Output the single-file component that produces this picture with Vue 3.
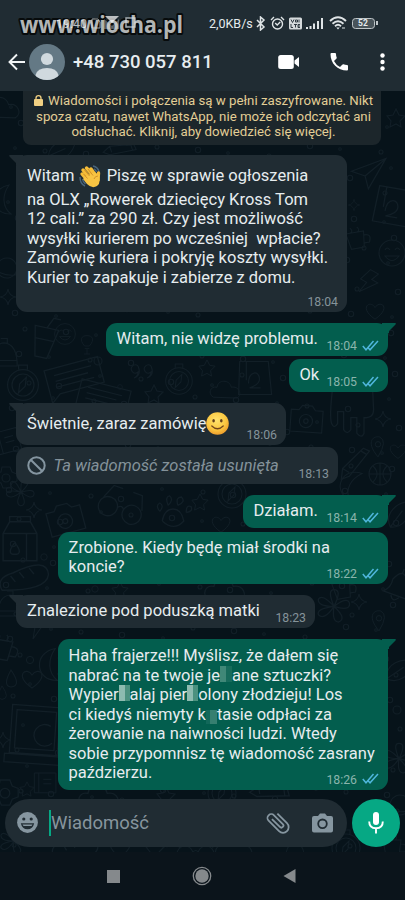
<script setup>
const messages = [
  {
    side: 'in', tail: true, top: 10, width: 331, height: 157, pad: 7.5, time: '18:04',
    lines: [
      [{ t: 'Witam ' }, { icon: 'wave' }, { t: ' Piszę w sprawie ogłoszenia' }],
      [{ t: 'na OLX „Rowerek dziecięcy Kross Tom' }],
      [{ t: '12 cali.” za 290 zł. Czy jest możliwość' }],
      [{ t: 'wysyłki kurierem po wcześniej  wpłacie?' }],
      [{ t: 'Zamówię kuriera i pokryję koszty wysyłki.' }],
      [{ t: 'Kurier to zapakuje i zabierze z domu.' }]
    ]
  },
  { side: 'out', tail: true, top: 11, width: 282, height: 33, pad: 6, time: '18:04', lines: [[{ t: 'Witam, nie widzę problemu.' }]] },
  { side: 'out', top: 3, width: 99, height: 33, pad: 6, time: '18:05', lines: [[{ t: 'Ok' }]] },
  { side: 'in', tail: true, top: 11, width: 270, height: 42, pad: 7, time: '18:06', lines: [[{ t: 'Świetnie, zaraz zamówię' }, { icon: 'smile' }]] },
  { side: 'in', deleted: true, top: 2, width: 322, height: 37, pad: 9, time: '18:13', lines: [[{ icon: 'ban' }, { t: 'Ta wiadomość została usunięta' }]] },
  { side: 'out', tail: true, top: 11, width: 145, height: 33, pad: 6, time: '18:14', lines: [[{ t: 'Działam.' }]] },
  { side: 'out', top: 3.5, width: 330, height: 52.5, pad: 6, time: '18:22', lines: [[{ t: 'Zrobione. Kiedy będę miał środki na' }], [{ t: 'koncie?' }]] },
  { side: 'in', tail: true, top: 11, width: 299, height: 33, pad: 6, time: '18:23', lines: [[{ t: 'Znalezione pod poduszką matki' }]] },
  {
    side: 'out', tail: true, top: 11, width: 330, height: 150.5, pad: 7, time: '18:26',
    lines: [
      [{ t: 'Haha frajerze!!! Myślisz, że dałem się' }],
      [{ t: 'nabrać na te twoje je' }, { icon: 'pixA' }, { t: 'ane sztuczki?' }],
      [{ t: 'Wypier' }, { icon: 'pixB' }, { t: 'alaj pier' }, { icon: 'pixB' }, { t: 'olony złodzieju! Los' }],
      [{ t: 'ci kiedyś niemyty k' }, { icon: 'pixC' }, { t: 'tasie odpłaci za' }],
      [{ t: 'żerowanie na naiwności ludzi. Wtedy' }],
      [{ t: 'sobie przypomnisz tę wiadomość zasrany' }],
      [{ t: 'paździerzu.' }]
    ]
  }
]

// Faint wallpaper ornaments: [shape, x, y, scale, rotation]
const doodles = [
  ['cloud', 2, 108, 1.1, 0], ['star', 396, 118, 1, 0], ['ring', 372, 112, 1, 0], ['pen', 120, 150, 1, 20], ['leaf', 60, 150, 1, 30],
  ['plane', 368, 172, 1.1, 10], ['shirt', 392, 206, 1.2, 10], ['cup', 358, 240, 1, -10], ['face', 392, 253, 1, 0], ['bolt', 368, 282, 1, 30],
  ['moon', 6, 200, 1, 0], ['planet', 7, 268, 1, 30], ['spark', 8, 297, 1, 0], ['heart', 375, 312, 0.9, 0], ['spark', 354, 205, 0.7, 0],
  ['glass', 44, 342, 1.2, 12], ['face', 65, 334, 0.8, 0], ['bulb', 87, 342, 0.8, 0], ['compass', 23, 385, 1.1, 0], ['note', 75, 375, 1.2, -15],
  ['note', 105, 396, 1.1, 14], ['star', 154, 394, 1, 0], ['quote', 145, 370, 1, 0], ['compass', 179, 381, 0.95, 0], ['star', 207, 368, 0.9, 0],
  ['cloud', 226, 390, 0.9, 0], ['shirt', 254, 378, 1.1, 0], ['ring', 98, 361, 1, 0], ['ring', 120, 387, 0.6, 0], ['pot', 4, 355, 1.1, 0],
  ['camera', 306, 420, 1.1, 4], ['octo', 352, 408, 1.2, 0], ['spark', 383, 419, 1, 0], ['pin', 378, 447, 0.9, 0], ['ball', 380, 474, 1, 0],
  ['pen', 355, 464, 1.2, -20], ['gear', 6, 477, 1, 0], ['book', 8, 440, 1, -15], ['moon', 352, 485, 1, 30], ['heart', 398, 452, 0.8, 0],
  ['flower', 20, 495, 1, 20], ['spark', 34, 510, 1, 0], ['camera', 65, 520, 1.2, -15], ['glasses', 120, 508, 1.2, 20], ['paw', 173, 515, 1.2, 0],
  ['star', 200, 502, 0.9, 0], ['compass', 232, 494, 1, 0], ['heart', 221, 525, 0.9, 0], ['carton', 20, 540, 1.3, 0], ['bread', 24, 578, 1.3, -8],
  ['ring', 44, 557, 0.8, 0], ['leaf', 398, 515, 1.1, 0], ['bell', 398, 586, 1.2, 20], ['cup', 344, 590, 1, -10], ['spark', 359, 602, 1, 0],
  ['flower', 334, 610, 1.2, 0], ['cloud', 226, 590, 1.2, 0], ['pin', 379, 621, 0.9, 0], ['star', 120, 590, 0.9, 0], ['ring', 95, 589, 0.8, 0],
  ['pot', 10, 606, 1, 0], ['bolt', 36, 626, 1, 0], ['cup', 3, 650, 1.2, 10], ['heart', 32, 680, 1, 0], ['drop', 11, 679, 1, 0],
  ['drop', 2, 693, 0.8, 0], ['moon', 52, 665, 1.1, 0], ['ring', 30, 660, 0.9, 0], ['laptop', 37, 735, 1.2, 4], ['star', 27, 789, 0.8, 0],
  ['gear', 5, 792, 1.2, 0], ['book', 46, 782, 0.9, 0], ['spark', 3, 740, 1, 0], ['leaf', 398, 670, 1.1, 20], ['ring', 397, 710, 1, 0],
  ['flower', 399, 762, 1.1, 0], ['planet', 400, 805, 1, 20], ['cloud', 100, 797, 1.2, 0], ['compass', 222, 793, 1, 0], ['star', 166, 796, 1, 0],
  ['pen', 270, 793, 1.2, 30], ['bread', 75, 848, 1.2, 0], ['compass', 346, 848, 1, 0], ['flower', 14, 844, 1, 0], ['star', 155, 849, 1, 0],
  ['cloud', 235, 849, 1.1, 0], ['paw', 295, 848, 1, 0], ['cup', 394, 848, 1, 0], ['heart', 120, 849, 1, 0], ['glasses', 195, 852, 1, 0]
]
const dots = []
for (let y = 98; y < 850; y += 23) {
  for (let x = 5 + (y * 7) % 19; x < 405; x += 37) {
    dots.push([x + (y * 3 + x) % 11, y + (x * 5) % 13, 1.3 + (x + y) % 3 * 0.7])
  }
}
const shapes = {
  cloud: 'M-14 8c-7-4-3-13 4-11c1-9 14-9 16 0c8-2 13 8 6 12z',
  star: 'M0-9l3 6l6 1l-5 5l1 6l-5-3l-6 3l1-6l-4-5l6-1z',
  ring: 'M-4 0a4 4 0 1 0 8 0a4 4 0 1 0-8 0',
  pen: 'M-15 8l4-8L11-10l4 4L-8 8zM-11 0l4 5M8-9l4 5',
  leaf: 'M-7 11C-13-2 0-12 10-12C13 2 4 12-7 11zM-7 11L4-4',
  plane: 'M-15 2L14-15L3 15L-2 4zM-2 4L14-15',
  shirt: 'M-13-15h26l3 30h-30zM-7-15v17M-5 5c0-12 10-12 10-4q0 5-9 8h10',
  cup: 'M-11-8h18l-2 16h-13zM7-4q8 0 4 8h-5M-6-13q3 3 0 5M1-13q3 3 0 5',
  face: 'M-13 0a13 13 0 1 0 26 0a13 13 0 1 0-26 0M-7-3q2-4 5 0M3-3q2-4 5 0M-7 3q7 9 14 0z',
  bolt: 'M-4-12h9l-3 8h7l-12 17l2-12h-7z',
  moon: 'M3-15C-18-11-15 15 5 14C-4 7-4-5 3-15z',
  planet: 'M-10 0a10 10 0 1 0 20 0a10 10 0 1 0-20 0M-9 3q-12 7-8 0M9-4q12-7 8 0Q5 10-12 7',
  spark: 'M0-8q1 7 8 8q-7 1-8 8q-1-7-8-8q7-1 8-8z',
  heart: 'M0 8C-19-5-5-14 0-5C6-14 19-5 0 8z',
  glass: 'M-10-12h20l-5 25h-10zM-8-2h16M0-12l4-9h6',
  bulb: 'M-3 5c-7-8-4-13 3-13s10 5 3 13zM-3 8h6M0 8v7M-4 15h8',
  compass: 'M-14 0a14 14 0 1 0 28 0a14 14 0 1 0-28 0M-10 0a10 10 0 1 0 20 0a10 10 0 1 0-20 0M-3-1l6-6l-1 8l-6 6zM-4-14v-4h8v4',
  note: 'M-24-10h46v22h-38l-8 6zM-17-4h32M-17 1h28M-17 6h32',
  quote: 'M-7-4a4 4 0 1 0 0 6q0 4-4 6q8-3 4-12M6-4a4 4 0 1 0 0 6q0 4-4 6q8-3 4-12',
  pot: 'M-12 10Q-12-10 0-11Q12-10 12 10zM-3-15h6v4M-12 5h24',
  camera: 'M-14-9h7l3-4h9l3 4h7v20h-29zM-6 1a6 6 0 1 0 12 0a6 6 0 1 0-12 0M-2 1a2 2 0 1 0 4 0a2 2 0 1 0-4 0',
  octo: 'M-16-18q-3 25-1 31q2 5 5 0v-10h5v15q3 5 6 0v-10h5v13q4 5 6 0v-13q8 1 8-7l-1-20',
  pin: 'M0 11C-15-7-4-13 2-11Q11-7 0 11zM-3-3a3 3 0 1 0 6 0a3 3 0 1 0-6 0',
  ball: 'M-11 0a11 11 0 1 0 22 0a11 11 0 1 0-22 0M-11 0h22M0-11v22M-7-8q8 8 0 16M7-8q-8 8 0 16',
  gear: 'M-10-4l5-1l1-5h8l2 5l5 2v7l-5 2l-2 5h-7l-2-5l-5-2zM-4 1a4 4 0 1 0 8 0a4 4 0 1 0-8 0',
  book: 'M-13-10h24v22h-24zM-8-10v22M-3-3h9M-3 2h9',
  flower: 'M0-3q-6-14 0-14q7 0 0 14q12-9 13-2q0 6-13 2q11 10 4 13q-6 0-4-13q-8 12-13 7q-2-5 13-7q-14 0-13-6q3-5 13 6',
  glasses: 'M-18 2a8 8 0 1 0 16 0a8 8 0 1 0-16 0M3 2a8 8 0 1 0 16 0a8 8 0 1 0-16 0M-2 0q3-3 5 0M-16-4l5-12h8M18-4l-4-12h-8',
  paw: 'M-9 5q2-10 9-10t9 10q-8 9-18 0M-11-3q-4-5 0-7q4 2 0 7M-4-8q-3-7 1-8q4 3-1 8M4-8q-2-7 3-7q4 4-3 7M11-2q0-7 4-5q2 4-4 5',
  carton: 'M-13-5l5-9h16l5 9v21h-26zM-13-5h26M-8-14v-4h16v4M5-5v21M-4 2q-7 9 0 9t0-9',
  bread: 'M-18 7Q-22-3-8-5Q20-14 19 0Q16 12-18 7zM-10-3l3 5M-3-5l3 5M5-7l3 5',
  bell: 'M-10 8q5-5 4-12q6-14 13 0q0 8 5 12zM-3 9q3 6 7 0M0-11v-4',
  drop: 'M0-9Q11 7 0 8Q-9 7 0-9z',
  laptop: 'M-22-24h40v40h-40zM-18-20h33v32h-33zM-26 17h46v7h-46zM11-8a9 9 0 1 0 2 14'
}
</script>

<template>
  <div class="phone">
    <svg class="wallpaper" width="405" height="900" viewBox="0 0 405 900" aria-hidden="true">
      <path v-for="(d, i) in doodles" :key="i" :d="shapes[d[0]]" :transform="`translate(${d[1]} ${d[2]}) rotate(${d[4]}) scale(${d[3]})`" />
      <circle v-for="(c, i) in dots" :key="'c' + i" :cx="c[0]" :cy="c[1]" :r="c[2]" />
    </svg>

    <header class="top">
      <div class="status">
        <div class="status-left">
          <span>19:40</span>
          <svg width="50" height="14" viewBox="0 0 50 14"><path d="M2 3h6l2 3v6H2z" fill="none" stroke="#dce3e6" /><path d="M15 0h14l-7 7z" fill="#fff" /><path d="M14 3v10h15V3l-7 7z" fill="#e5eaec" opacity=".5" /><path d="M36 2h9v9h-9z" fill="none" stroke="#dce3e6" stroke-width="1.500" /></svg>
        </div>
        <div class="status-right">
          <span class="speed">2,0KB/s</span>
          <svg class="bt" width="10" height="15" viewBox="0 0 10 15"><path d="M1 4l7 7-3.500 3V1L8 4l-7 7" fill="none" stroke="#dfe4e6" stroke-width="1.500" /></svg>
          <svg class="alarm" width="15" height="15" viewBox="0 0 15 15" fill="none" stroke="#dfe4e6" stroke-width="1.400"><circle cx="7.500" cy="8" r="5" /><path d="M1 4l3-3M14 4l-3-3M5.200 7l2 2 3-3" /></svg>
          <svg class="volte" width="13" height="13" viewBox="0 0 13 13"><rect width="13" height="12" y=".5" rx="1.500" fill="#d5dadc" /><path d="M2 2.500l1.500 3 1.500-3M6.500 3h2v2h-2zM10 2.500v3M2 7v3.500h2M5 7.500h3M6.500 7.500v3M11 7.500H9v3h2M9 9h2" fill="none" stroke="#202c33" stroke-width=".9" /></svg>
          <svg class="signal" width="19" height="13" viewBox="0 0 19 13" fill="#dfe4e6"><path d="M1 10h2v2H1zM4.500 9h2v3h-2zM8 6.500h2V12H8zM12 4h2v8h-2zM16 1h2v11h-2z" /></svg>
          <svg class="wifi" width="18" height="14" viewBox="0 0 18 14"><path d="M1 5q8-7.500 16 0M3.500 7.700q5.500-5 11 0M6 10.200q3-2.700 6 0" fill="none" stroke="#dfe4e6" stroke-width="1.900" /><path d="M7.300 11.500h3.400L9 13.500z" fill="#dfe4e6" /><path d="M13 11h3v2h-3z" fill="#7d878c" /></svg>
          <span class="battery"><i></i><b>52</b></span>
        </div>
      </div>
      <div class="bar">
        <svg class="back" width="18" height="18" viewBox="0 0 18 18"><path d="M17 9H2M9 1.500L1.500 9 9 16.500" fill="none" stroke="#f1f4f5" stroke-width="1.900" /></svg>
        <svg class="avatar" width="36" height="36" viewBox="0 0 36 36"><clipPath id="round"><circle cx="18" cy="18" r="18" /></clipPath><g clip-path="url(#round)"><rect width="36" height="36" fill="#647985" /><circle cx="18" cy="15" r="6.100" fill="#d0d9de" /><path d="M6.500 36v-5q2-7 11.500-7t11.500 7v5z" fill="#d0d9de" /></g></svg>
        <span class="phone-no">+48 730 057 811</span>
        <svg class="video" width="22" height="14" viewBox="0 0 22 14" fill="#fff"><rect x=".2" width="15.600" height="14" rx="2.500" /><path d="M16.500 5.500L21 2v10l-4.500-3.500z" /></svg>
        <svg class="call" width="18" height="18" viewBox="0 0 18 18"><path d="M1.500 0H5q1 0 1 1 0 2 .7 3.500.2.700-.4 1.300L4 8q2 4 6 6l2.200-2.300q.6-.6 1.300-.4 1.500.7 3.500.7 1 0 1 1v3.500q0 1-1 1C7.500 17.500.5 10.500.5 1q0-1 1-1z" fill="#fff" /></svg>
        <svg class="more" width="5" height="18" viewBox="0 0 5 18" fill="#fff"><circle cx="2.500" cy="2.500" r="2.200" /><circle cx="2.500" cy="9" r="2.200" /><circle cx="2.500" cy="15.500" r="2.200" /></svg>
      </div>
      <svg class="watermark" width="190" height="40" viewBox="0 0 190 40"><text x="8" y="27" textLength="163" lengthAdjust="spacingAndGlyphs">www.wiocha.pl</text></svg>
    </header>

    <main class="chat">
      <div class="notice">
        <div class="n1"><svg width="9" height="11" viewBox="0 0 9 11"><rect y="4" width="9" height="7" rx="1" fill="#f0cf82" /><path d="M2 5V3q0-2.300 2.500-2.300T7 3v2" fill="none" stroke="#f0cf82" stroke-width="1.300" /></svg>Wiadomości i połączenia są w pełni zaszyfrowane. Nikt</div>
        <div class="n2">spoza czatu, nawet WhatsApp, nie może ich odczytać ani</div>
        <div class="n3">odsłuchać. Kliknij, aby dowiedzieć się więcej.</div>
      </div>

      <div
        v-for="(m, i) in messages" :key="i" class="bubble" :class="[m.side, { tail: m.tail, deleted: m.deleted }]"
        :style="{ marginTop: m.top + 'px', width: m.width + 'px', height: m.height + 'px', paddingTop: m.pad + 'px' }"
      >
        <div class="text">
          <div v-for="(line, j) in m.lines" :key="j" class="line" :class="{ tall: line.some(s => s.icon === 'wave' || s.icon === 'smile') }">
            <template v-for="(s, k) in line" :key="k">
              <span v-if="s.t">{{ s.t }}</span>
              <svg v-else-if="s.icon === 'wave'" class="wave" width="22" height="23" viewBox="0 0 22 23">
                <path d="M14 1q5 1 6 6M15 4q2 1 2.500 3M1 12q0 7 5 9M3.500 14q.5 3 3 5" fill="none" stroke="#48637b" stroke-width="1.500" />
                <g fill="none" stroke="#f6bd38" stroke-width="3.400" stroke-linecap="round"><path d="M3 9l7 8M4 5l9 10M7.500 3l8 9M12 4l5 7M19 15l.5-7" /></g>
                <path d="M7 11l9-4 4 4q2 7-2 10-5 3-10-2l-4-5z" fill="#f8c443" />
                <path d="M5.500 5l5 6M9 4l5 6.500M4.500 9l4 4.500M15 14q1-3 4-3" fill="none" stroke="#c98525" stroke-width=".8" />
              </svg>
              <svg v-else-if="s.icon === 'smile'" class="smile" width="23" height="23" viewBox="0 0 23 23">
                <defs><radialGradient id="sun" cx="45%" cy="35%" r="65%"><stop offset="0" stop-color="#ffe36d" /><stop offset=".65" stop-color="#fbc740" /><stop offset="1" stop-color="#ee9e2d" /></radialGradient></defs>
                <circle cx="11.500" cy="11.500" r="11.300" fill="url(#sun)" /><ellipse cx="7.600" cy="8.800" rx="1.300" ry="1.800" fill="#65401b" /><ellipse cx="15.300" cy="8.800" rx="1.300" ry="1.800" fill="#65401b" /><path d="M5.800 14q5.700 5.500 11.400 0" fill="none" stroke="#72451b" stroke-width="1.300" stroke-linecap="round" />
              </svg>
              <svg v-else-if="s.icon === 'ban'" class="ban" width="19" height="19" viewBox="0 0 19 19" fill="none" stroke="#8495a0" stroke-width="2"><circle cx="9.500" cy="9.500" r="8.200" /><path d="M3.700 3.700l11.600 11.600" /></svg>
              <i v-else class="pix" :class="s.icon"></i>
            </template>
          </div>
        </div>
        <div class="meta">
          <span>{{ m.time }}</span>
          <svg v-if="m.side === 'out'" class="ticks" width="17" height="11" viewBox="0 0 17 11"><path d="M.8 6l3.200 3.800L11.500 1M6.300 8l1.700 1.800L16 1" fill="none" stroke="#4fb6dc" stroke-width="1.500" /></svg>
        </div>
        <svg v-if="m.tail" class="nib" width="14" height="10" viewBox="0 0 14 10"><path d="M14 0H1q-1.500 0-.5 1.500L7 8v2h7z" /></svg>
      </div>
    </main>

    <footer class="composer">
      <div class="field">
        <svg class="emoji" width="21" height="21" viewBox="0 0 21 21"><circle cx="10.500" cy="10.500" r="10.400" fill="#8696a0" /><g fill="#202c33"><circle cx="6.800" cy="7" r="1.600" /><circle cx="14.200" cy="7" r="1.600" /><path d="M3.800 11.200h13.400q-1.400 6-6.700 6t-6.700-6z" /></g><path d="M5.500 12.500h10l-1 1.500h-8z" fill="#8696a0" /></svg>
        <i class="caret"></i>
        <span class="hint">Wiadomość</span>
        <svg class="clip" width="26" height="26" viewBox="1 1 22 22"><path d="M16.500 6v11.500a4 4 0 0 1-8 0V5a2.500 2.500 0 0 1 5 0v10.500a1 1 0 0 1-2 0V6H10v9.500a2.500 2.500 0 0 0 5 0V5a4 4 0 0 0-8 0v12.500a5.500 5.500 0 0 0 11 0V6z" transform="rotate(-45 12 12)" fill="#8696a0" /></svg>
        <svg class="cam" width="21" height="20" viewBox="0 0 21 20"><path d="M2 3h4l2-2.500h5L15 3h4q2 0 2 2v12.500q0 2-2 2H2q-2 0-2-2V5q0-2 2-2z" fill="#8696a0" /><circle cx="10.500" cy="10.800" r="4.300" fill="#8696a0" stroke="#202c33" stroke-width="1.800" /></svg>
      </div>
      <div class="mic">
        <svg width="16" height="22" viewBox="0 0 16 22"><rect x="5" width="6" height="13" rx="3" fill="#fff" /><path d="M1.200 9.500q0 6.700 6.800 6.700t6.800-6.700M8 16v5.500" fill="none" stroke="#fff" stroke-width="1.900" /></svg>
      </div>
    </footer>

    <nav class="nav">
      <i class="square"></i>
      <svg class="home" width="20" height="20" viewBox="0 0 20 20"><circle cx="10" cy="10" r="8.700" fill="none" stroke="#85898c" stroke-width="1.300" /><circle cx="10" cy="10" r="6.700" fill="#85898c" /></svg>
      <svg class="prev" width="13" height="14" viewBox="0 0 13 14"><path d="M12.500 0v14L.5 7z" fill="#85898c" /></svg>
    </nav>
  </div>
</template>

<style>
body { margin: 0; background: #07131a; }
</style>

<style scoped>
.phone { position: relative; isolation: isolate; width: 405px; height: 900px; display: flex; flex-direction: column; overflow: hidden; background: #07131a; font-family: Roboto, "Noto Sans", sans-serif; color: #e6ecef; }
.wallpaper { position: absolute; left: 0; top: 0; z-index: -1; fill: none; stroke: #121f27; stroke-width: 1.1; }
svg { display: block; flex: none; }
.top { position: relative; height: 91px; flex: none; background: #202c33; }
.status { height: 44px; display: flex; justify-content: space-between; font-size: 12.5px; }
.status-left { position: relative; z-index: 1; opacity: .7; display: flex; align-items: center; gap: 1px; padding-left: 56px; height: 46px; color: #fff; }
.status-left svg { margin-left: 2px; }
.status-right { display: flex; align-items: center; height: 46px; padding-right: 30.5px; }
.speed { width: 44px; font-size: 12.5px; white-space: nowrap; }
.bt { margin-left: 2.5px; }
.alarm { margin-left: 4.5px; }
.volte { margin-left: 4px; }
.signal { margin-left: 3px; }
.wifi { margin-left: 4.5px; }
.battery { position: relative; box-sizing: border-box; width: 23px; height: 11px; margin-left: 5px; border: 1.5px solid #bfc6c9; border-radius: 3.5px; background: #49545a; display: flex; align-items: center; justify-content: center; }
.battery b { font-size: 8.5px; line-height: 8px; font-weight: 700; }
.battery i { position: absolute; right: -4px; top: 2px; width: 2px; height: 4px; background: #bfc6c9; }
.watermark { position: absolute; left: 12px; top: 6px; opacity: .9; overflow: visible; }
.watermark text { font: 700 23.5px "Open Sans", sans-serif; fill: #c2c4c4; stroke: #050808; stroke-width: 4px; paint-order: stroke; stroke-linejoin: round; }
.bar { height: 36px; display: flex; align-items: center; padding: 0 20px 0 8px; }
.avatar { margin-left: 3px; }
.phone-no { margin-left: 8px; font-size: 18.5px; font-weight: 500; flex: 1; white-space: nowrap; color: #e7edf0; }
.call { margin-left: 30px; }
.more { margin-left: 32px; }
.chat { height: 699px; flex: none; display: flex; flex-direction: column; align-items: flex-start; padding: 0 17px 0 16px; }
.notice { box-sizing: border-box; width: 358px; height: 54px; margin-left: 7px; border-radius: 0 0 8px 8px; background: #1c262b; color: #e3ce96; font-size: 13.25px; line-height: 15.6px; padding: 2px 0 0 3px; white-space: nowrap; display: flex; flex-direction: column; align-items: center; }
.n1 { display: flex; align-items: center; }
.n1 svg { margin-right: 5px; }
.bubble { position: relative; box-sizing: border-box; display: grid; flex: none; padding: 0 9px 3px 11px; border-radius: 11px; background: #202c33; }
.bubble.out { align-self: flex-end; padding-left: 10.5px; background: #035e4e; }
.text, .meta { grid-area: 1 / 1; }
.line { display: flex; align-items: center; height: 19.5px; font-size: 16.5px; line-height: 19.5px; white-space: pre; }
.line.tall { height: 27px; }
.wave { margin: 0 1.5px 0 .5px; }
.meta { align-self: end; justify-self: end; display: flex; align-items: center; gap: 5px; font-size: 12.3px; line-height: 14px; color: #85939a; }
.out .meta { color: #8ab5ac; }
.ticks { margin-bottom: 2px; }
.nib { position: absolute; top: 0; left: -7px; fill: #202c33; }
.out .nib { left: auto; right: -8px; transform: scaleX(-1); fill: #035e4e; }
.deleted .text { color: #84929a; font-style: italic; }
.ban { margin-right: 7.5px; }
.pix { align-self: stretch; width: 11px; }
.pixA { background: linear-gradient(90deg, #408878 50%, #176b5b 50%); height: 16px; width: 12px; }
.pixB { background: linear-gradient(90deg, #8dbbb0 55%, #4b917f 55%); height: 16px; }
.pixC { background: linear-gradient(90deg, #12685a 40%, #367f70 40%); height: 14px; margin-top: 5px; }
.composer { display: flex; flex: none; height: 62px; box-sizing: border-box; padding: 8.5px 5px 0; }
.field { box-sizing: border-box; width: 342px; height: 48px; border-radius: 24px; background: #202c33; display: flex; align-items: center; padding: 0 14px 0 12px; }
.caret { width: 2px; height: 26px; margin-left: 11px; background: #06a884; }
.hint { flex: 1; font-size: 18.5px; color: #87959e; }
.cam { margin-left: 21px; }
.mic { width: 48px; height: 48px; margin-left: 5px; border-radius: 50%; background: #06a884; display: flex; align-items: center; justify-content: center; }
.nav { height: 48px; flex: none; background: #0b141b; display: flex; align-items: center; }
.square { width: 13px; height: 13px; margin-left: 107px; background: #85898c; }
.home { margin-left: 72px; }
.prev { margin-left: 71px; }
</style>
